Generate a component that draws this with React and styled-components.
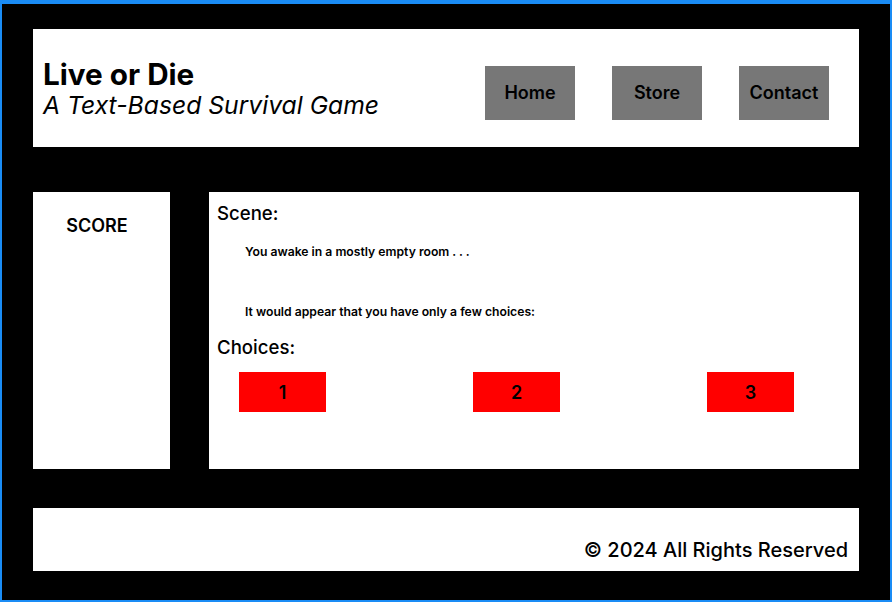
import React from 'react'
import styled, { createGlobalStyle } from 'styled-components'

const Global = createGlobalStyle`
    body {
        margin: 0;
        font-family: 'Inter', 'Liberation Sans', sans-serif;
        color: #000;
    }
`

const Frame = styled.div`
    box-sizing: border-box;
    width: 892px;
    height: 602px;
    background: #000;
    border: 2px solid #1a8cf5;
    border-top-width: 4px;
    padding: 25px 31px 29px 31px;
    display: flex;
    flex-direction: column;
`

const Panel = styled.div`
    background: #fff;
`

const Header = styled(Panel)`
    height: 118px;
    display: flex;
    align-items: center;
    justify-content: space-between;
    padding: 0 30px 0 10px;
`

const Titles = styled.div`
    display: flex;
    flex-direction: column;
    padding-top: 2px;
`

const Title = styled.h1`
    margin: 0;
    font-size: 29.7px;
    font-weight: 700;
    line-height: 32px;
`

const Subtitle = styled.h2`
    margin: 0;
    font-size: 24.7px;
    font-weight: 400;
    font-style: italic;
    line-height: 30px;
`

const Nav = styled.nav`
    display: flex;
    gap: 37px;
    padding-top: 9px;
`

const NavButton = styled.button`
    width: 90px;
    height: 54px;
    border: none;
    background: #777;
    font-family: inherit;
    font-size: 18px;
    font-weight: 600;
    color: #000;
    padding: 0;
`

const Middle = styled.div`
    display: flex;
    gap: 39px;
    margin-top: 45px;
    height: 277px;
`

const Sidebar = styled(Panel)`
    width: 137px;
    text-align: center;
    padding: 23px 9px 0 0;
    box-sizing: border-box;
`

const ScoreLabel = styled.div`
    font-size: 18px;
    font-weight: 600;
`

const Main = styled(Panel)`
    flex: 1;
    padding: 10px 8px;
`

const Heading = styled.div`
    font-size: 18.6px;
    font-weight: 500;
    line-height: 22px;
    margin-top: ${p => p.$top || 0}px;
`

const Line = styled.p`
    margin: ${p => p.$top}px 0 0 28px;
    font-size: 12.2px;
    font-weight: 600;
    line-height: 16px;
`

const ChoiceRow = styled.div`
    display: flex;
    justify-content: space-between;
    padding: 14px 57px 0 22px;
`

const Choice = styled.button`
    width: 87px;
    height: 40px;
    border: none;
    background: #ff0000;
    font-family: inherit;
    font-size: 18px;
    font-weight: 600;
    color: #000;
    padding: 0;
`

const Footer = styled(Panel)`
    margin-top: 39px;
    height: 63px;
    display: flex;
    align-items: flex-end;
    justify-content: flex-end;
    padding: 0 11px 9px 0;
    box-sizing: border-box;
`

const Copy = styled.div`
    font-size: 20px;
    font-weight: 500;
`

const App = () => {
    return (
        <>
        <Global />
        <Frame>
            <Header>
                <Titles>
                    <Title>Live or Die</Title>
                    <Subtitle>A Text-Based Survival Game</Subtitle>
                </Titles>
                <Nav>
                    <NavButton>Home</NavButton>
                    <NavButton>Store</NavButton>
                    <NavButton>Contact</NavButton>
                </Nav>
            </Header>
            <Middle>
                <Sidebar>
                    <ScoreLabel>SCORE</ScoreLabel>
                </Sidebar>
                <Main>
                    <Heading>Scene:</Heading>
                    <Line $top={20}>You awake in a mostly empty room . . .</Line>
                    <Line $top={44}>It would appear that you have only a few choices:</Line>
                    <Heading $top={16}>Choices:</Heading>
                    <ChoiceRow>
                        <Choice>1</Choice>
                        <Choice>2</Choice>
                        <Choice>3</Choice>
                    </ChoiceRow>
                </Main>
            </Middle>
            <Footer>
                <Copy>© 2024 All Rights Reserved</Copy>
            </Footer>
        </Frame>
        </>
    )
}

export default App
